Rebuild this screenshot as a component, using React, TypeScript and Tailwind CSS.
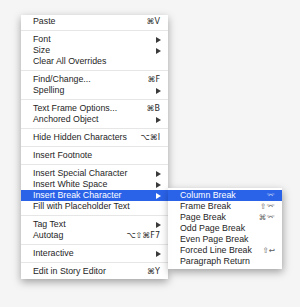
import React from 'react';

type Item =
  | { type: 'sep' }
  | { type: 'item'; label: string; shortcut?: string; sub?: boolean; active?: boolean };

const items: Item[] = [
  { type: 'item', label: 'Paste', shortcut: '⌘V' },
  { type: 'sep' },
  { type: 'item', label: 'Font', sub: true },
  { type: 'item', label: 'Size', sub: true },
  { type: 'item', label: 'Clear All Overrides' },
  { type: 'sep' },
  { type: 'item', label: 'Find/Change...', shortcut: '⌘F' },
  { type: 'item', label: 'Spelling', sub: true },
  { type: 'sep' },
  { type: 'item', label: 'Text Frame Options...', shortcut: '⌘B' },
  { type: 'item', label: 'Anchored Object', sub: true },
  { type: 'sep' },
  { type: 'item', label: 'Hide Hidden Characters', shortcut: '⌥⌘I' },
  { type: 'sep' },
  { type: 'item', label: 'Insert Footnote' },
  { type: 'sep' },
  { type: 'item', label: 'Insert Special Character', sub: true },
  { type: 'item', label: 'Insert White Space', sub: true },
  { type: 'item', label: 'Insert Break Character', sub: true, active: true },
  { type: 'item', label: 'Fill with Placeholder Text' },
  { type: 'sep' },
  { type: 'item', label: 'Tag Text', sub: true },
  { type: 'item', label: 'Autotag', shortcut: '⌥⇧⌘F7' },
  { type: 'sep' },
  { type: 'item', label: 'Interactive', sub: true },
  { type: 'sep' },
  { type: 'item', label: 'Edit in Story Editor', shortcut: '⌘Y' },
];

const breaks = [
  { label: 'Column Break', shortcut: '⌤' },
  { label: 'Frame Break', shortcut: '⇧⌤' },
  { label: 'Page Break', shortcut: '⌘⌤' },
  { label: 'Odd Page Break' },
  { label: 'Even Page Break' },
  { label: 'Forced Line Break', shortcut: '⇧↩' },
  { label: 'Paragraph Return' },
];

const Arrow = ({ white }: { white?: boolean }) => (
  <svg width="5" height="6" viewBox="0 0 5 6" className="mr-[-1px]">
    <polygon points="0,0 5,3 0,6" fill={white ? '#ffffff' : '#3a3a3a'} />
  </svg>
);

const SubMenu = () => (
  <div className="absolute left-full top-[-2px] z-10 w-[114px] bg-white/[0.97] pt-[2px] pb-[2px] shadow-[1px_3px_8px_rgba(0,0,0,0.35)]">
    {breaks.map((b, i) => (
      <div
        key={b.label}
        className={`flex h-[11px] items-center justify-between pl-[12px] pr-[7px] ${
          i === 0 ? 'bg-[#2a62e8] text-white' : 'text-[#1e1e1e]'
        }`}
      >
        <span>{b.label}</span>
        {b.shortcut && (
          <span
            className={`font-['DejaVu_Sans',sans-serif] text-[7.5px] ${
              i === 0 ? 'text-[#c9d7f7]' : 'text-[#5a5a5a]'
            }`}
          >
            {b.shortcut}
          </span>
        )}
      </div>
    ))}
  </div>
);

export default function App() {
  return (
    <div className="h-[307px] w-[300px] bg-[#f5f5f5] pl-[21px] pt-[15px] font-['Liberation_Sans',sans-serif] text-[8.8px] leading-none">
      <div className="w-[147px] bg-white/[0.97] pt-[1px] pb-[2px] shadow-[0_3px_8px_rgba(0,0,0,0.35)]">
        {items.map((it, i) =>
          it.type === 'sep' ? (
            <div key={i} className="my-[3px] h-px bg-[#e6e6e6]" />
          ) : (
            <div
              key={i}
              className={`relative flex h-[11px] items-center justify-between pl-[12px] pr-[8px] ${
                it.active ? 'bg-[#2a62e8] text-white' : 'text-[#1e1e1e]'
              }`}
            >
              <span>{it.label}</span>
              {it.shortcut && (
                <span className="font-['DejaVu_Sans',sans-serif] text-[8px] text-[#2a2a2a]">{it.shortcut}</span>
              )}
              {it.sub && <Arrow white={it.active} />}
              {it.active && <SubMenu />}
            </div>
          )
        )}
      </div>
    </div>
  );
}
